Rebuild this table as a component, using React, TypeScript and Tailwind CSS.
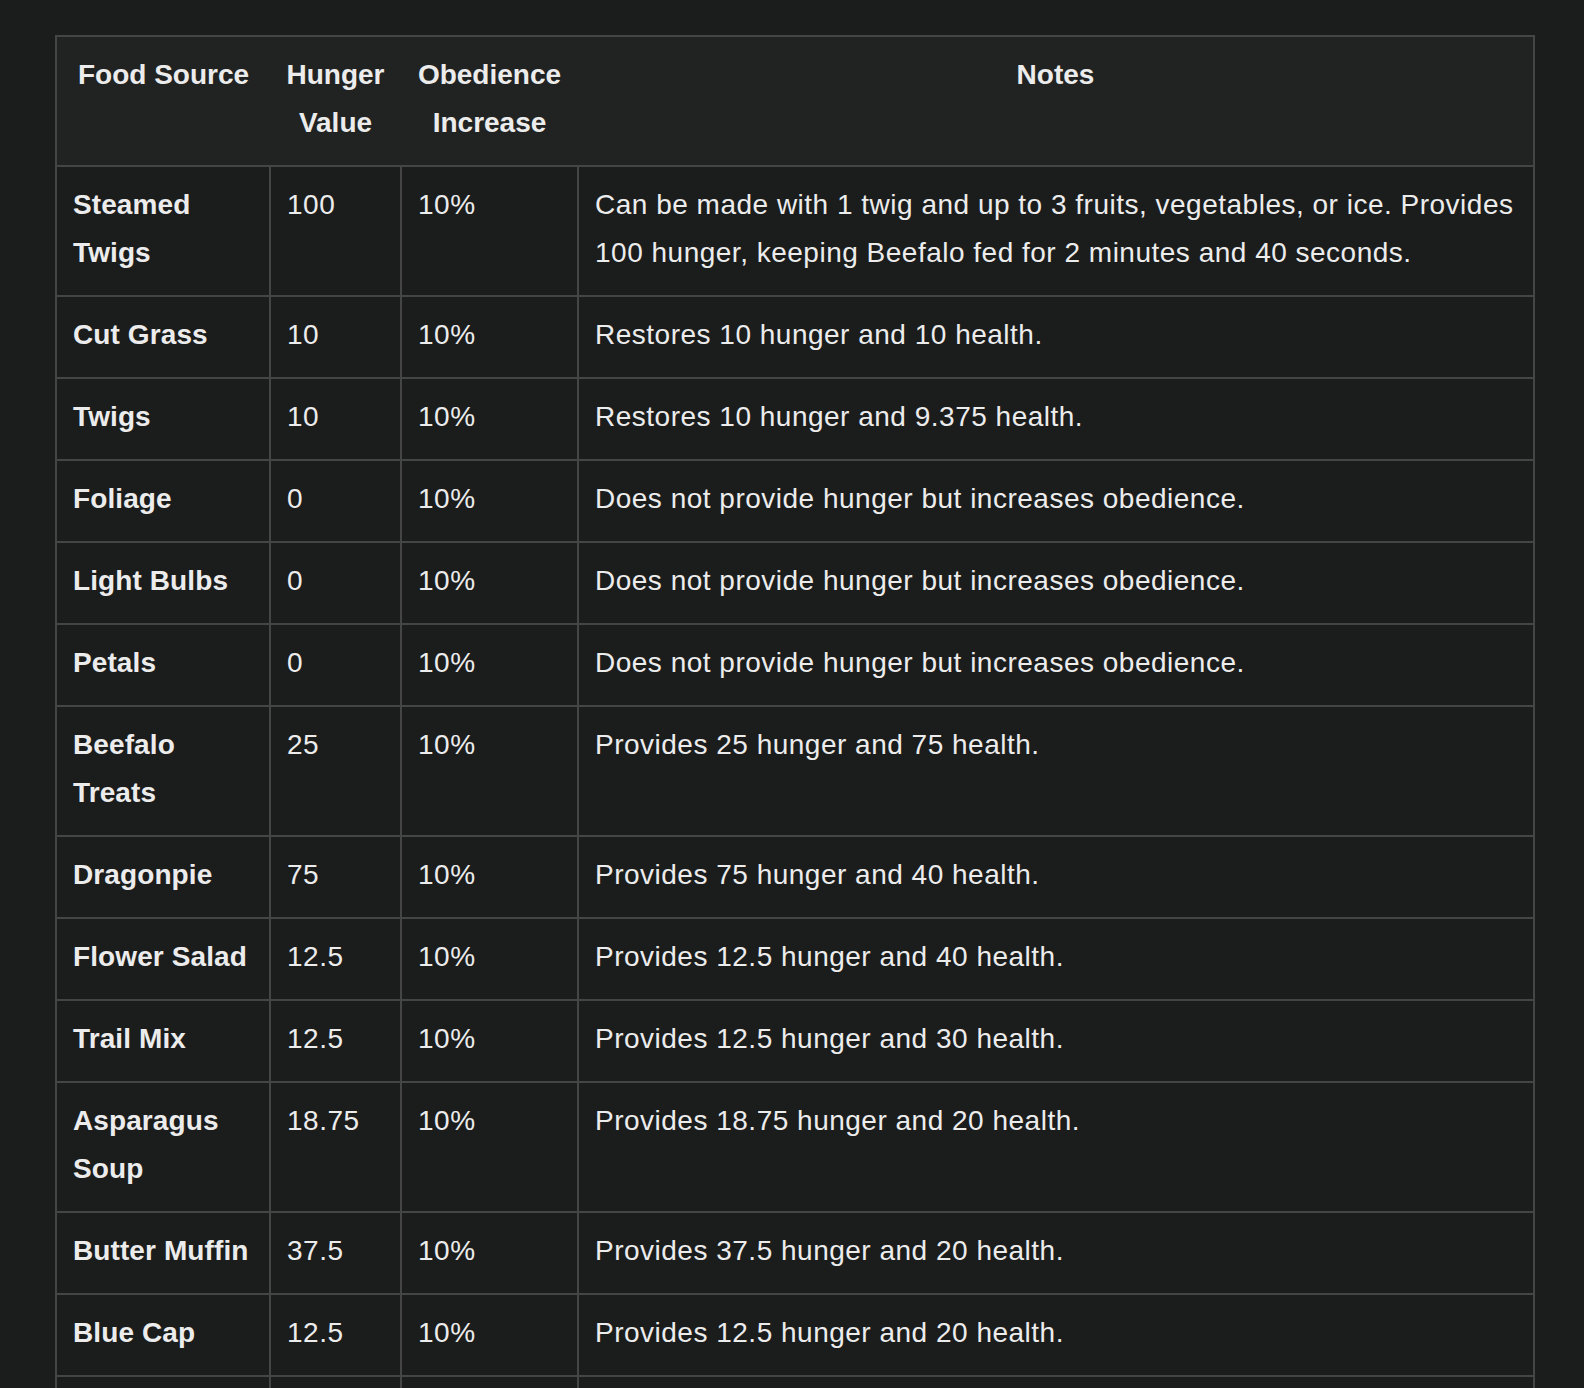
const foods = [
  {
    name: "Steamed Twigs",
    hunger: "100",
    obedience: "10%",
    notes:
      "Can be made with 1 twig and up to 3 fruits, vegetables, or ice. Provides 100 hunger, keeping Beefalo fed for 2 minutes and 40 seconds.",
  },
  { name: "Cut Grass", hunger: "10", obedience: "10%", notes: "Restores 10 hunger and 10 health." },
  { name: "Twigs", hunger: "10", obedience: "10%", notes: "Restores 10 hunger and 9.375 health." },
  { name: "Foliage", hunger: "0", obedience: "10%", notes: "Does not provide hunger but increases obedience." },
  { name: "Light Bulbs", hunger: "0", obedience: "10%", notes: "Does not provide hunger but increases obedience." },
  { name: "Petals", hunger: "0", obedience: "10%", notes: "Does not provide hunger but increases obedience." },
  { name: "Beefalo Treats", hunger: "25", obedience: "10%", notes: "Provides 25 hunger and 75 health." },
  { name: "Dragonpie", hunger: "75", obedience: "10%", notes: "Provides 75 hunger and 40 health." },
  { name: "Flower Salad", hunger: "12.5", obedience: "10%", notes: "Provides 12.5 hunger and 40 health." },
  { name: "Trail Mix", hunger: "12.5", obedience: "10%", notes: "Provides 12.5 hunger and 30 health." },
  { name: "Asparagus Soup", hunger: "18.75", obedience: "10%", notes: "Provides 18.75 hunger and 20 health." },
  { name: "Butter Muffin", hunger: "37.5", obedience: "10%", notes: "Provides 37.5 hunger and 20 health." },
  { name: "Blue Cap", hunger: "12.5", obedience: "10%", notes: "Provides 12.5 hunger and 20 health." },
  { name: "Green Cap", hunger: "12.5", obedience: "10%", notes: "Provides 12.5 hunger and 0 health." },
  { name: "Red Cap", hunger: "12.5", obedience: "10%", notes: "Provides 12.5 hunger and -20 health." },
]

export default function App() {
  return (
    <div
      className="min-h-screen bg-[#1b1c1c] pt-[35px] pl-[55px] text-[#ececec]"
      style={{ fontFamily: '"Liberation Sans", Arial, sans-serif' }}
    >
      <table className="w-[1480px] table-fixed border-collapse border-2 border-[#454545] text-[28px] leading-[48px] tracking-[0.5px]">
        <colgroup>
          <col className="w-[214px]" />
          <col className="w-[131px]" />
          <col className="w-[177px]" />
          <col />
        </colgroup>
        <thead>
          <tr className="bg-[#212322]">
            <th className="px-4 pt-[14px] pb-[18px] text-center align-top font-semibold tracking-normal">Food Source</th>
            <th className="px-4 pt-[14px] pb-[18px] text-center align-top font-semibold tracking-normal">Hunger Value</th>
            <th className="px-4 pt-[14px] pb-[18px] text-center align-top font-semibold tracking-normal">Obedience Increase</th>
            <th className="px-4 pt-[14px] pb-[18px] text-center align-top font-semibold tracking-normal">Notes</th>
          </tr>
        </thead>
        <tbody>
          {foods.map((f) => (
            <tr key={f.name}>
              <td className="border-2 border-[#454545] px-4 pt-[14px] pb-[18px] align-top font-semibold tracking-[0.1px]">
                {f.name}
              </td>
              <td className="border-2 border-[#454545] px-4 pt-[14px] pb-[18px] align-top">{f.hunger}</td>
              <td className="border-2 border-[#454545] px-4 pt-[14px] pb-[18px] align-top">{f.obedience}</td>
              <td className="border-2 border-[#454545] px-4 pt-[14px] pb-[18px] align-top">{f.notes}</td>
            </tr>
          ))}
        </tbody>
      </table>
    </div>
  )
}
